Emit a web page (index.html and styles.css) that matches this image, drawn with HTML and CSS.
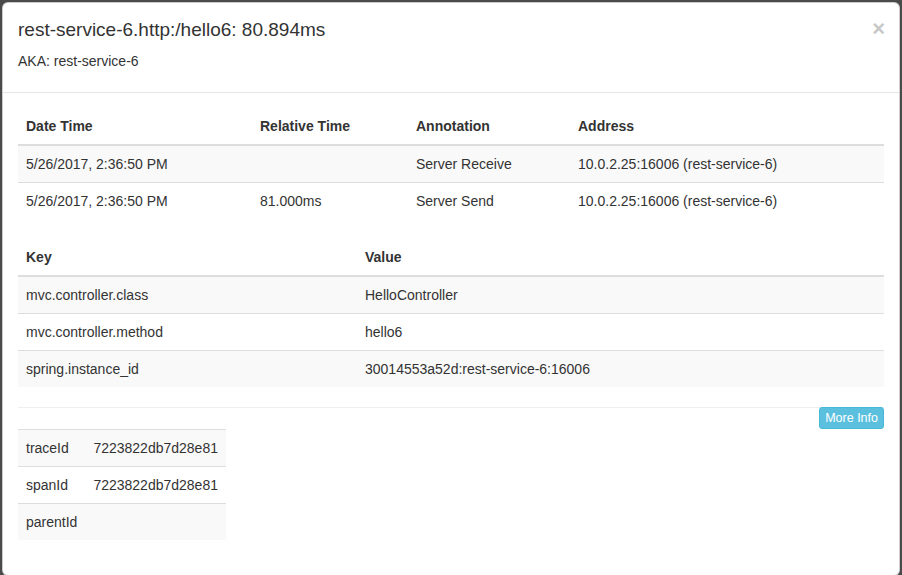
FILE: index.html
```html
<!DOCTYPE html>
<html>
<head>
<meta charset="utf-8">
<link rel="stylesheet" href="styles.css">
</head>
<body>
<div class="modal">
  <div class="modal-header">
    <div class="titles">
      <h4 class="title">rest-service-6.http:/hello6: 80.894ms</h4>
      <h5 class="aka">AKA: rest-service-6</h5>
    </div>
    <span class="close">&times;</span>
  </div>
  <div class="modal-body">
    <table class="table striped annotations">
      <colgroup><col class="c1"><col class="c2"><col class="c3"><col></colgroup>
      <thead>
        <tr><th>Date Time</th><th>Relative Time</th><th>Annotation</th><th>Address</th></tr>
      </thead>
      <tbody>
        <tr><td>5/26/2017, 2:36:50 PM</td><td></td><td>Server Receive</td><td>10.0.2.25:16006 (rest-service-6)</td></tr>
        <tr><td>5/26/2017, 2:36:50 PM</td><td>81.000ms</td><td>Server Send</td><td>10.0.2.25:16006 (rest-service-6)</td></tr>
      </tbody>
    </table>
    <table class="table striped tags">
      <colgroup><col class="k1"><col></colgroup>
      <thead>
        <tr><th>Key</th><th>Value</th></tr>
      </thead>
      <tbody>
        <tr><td>mvc.controller.class</td><td>HelloController</td></tr>
        <tr><td>mvc.controller.method</td><td>hello6</td></tr>
        <tr><td>spring.instance_id</td><td>30014553a52d:rest-service-6:16006</td></tr>
      </tbody>
    </table>
    <hr class="divider">
    <div class="actions">
      <button class="btn-info">More Info</button>
    </div>
    <table class="table striped ids">
      <tbody>
        <tr><td>traceId</td><td>7223822db7d28e81</td></tr>
        <tr><td>spanId</td><td>7223822db7d28e81</td></tr>
        <tr><td>parentId</td><td></td></tr>
      </tbody>
    </table>
  </div>
</div>
</body>
</html>
```
FILE: styles.css
```css
html, body {
  margin: 0;
  padding: 0;
}
body {
  background: #4a4a4a;
  font-family: "Liberation Sans", Arial, Helvetica, sans-serif;
  font-size: 14px;
  line-height: 20px;
  color: #333;
  padding: 2px 0 0 2px;
  height: 575px;
  box-sizing: border-box;
  overflow: hidden;
}
.modal {
  width: 898px;
  background: #fff;
  border: 1px solid rgba(0,0,0,.2);
  border-radius: 6px;
  box-sizing: border-box;
}
.modal-header {
  display: flex;
  justify-content: space-between;
  align-items: flex-start;
  padding: 17px 15px 15px;
  border-bottom: 1px solid #e5e5e5;
}
.title {
  margin: 0;
  font-size: 19px;
  line-height: 20px;
  font-weight: 500;
  color: #333;
}
.aka {
  margin: 11px 0 6px;
  font-size: 14px;
  line-height: 20px;
  font-weight: 500;
}
.close {
  font-size: 22px;
  font-weight: bold;
  line-height: 21px;
  color: #c8c8c8;
  margin-top: -2px;
  margin-right: -1px;
}
.modal-body {
  padding: 15px;
}
.table {
  border-collapse: collapse;
  border-spacing: 0;
  margin-bottom: 20px;
}
.annotations, .tags {
  width: 100%;
  table-layout: fixed;
}
.table th, .table td {
  padding: 8px;
  text-align: left;
  vertical-align: top;
  line-height: 20px;
  height: 20px;
}
.table th {
  font-weight: bold;
  border-bottom: 2px solid #ddd;
}
.table td {
  border-top: 1px solid #ddd;
}
.table thead + tbody tr:first-child td {
  border-top: 0;
}
.striped tbody tr:nth-child(odd) {
  background: #f9f9f9;
}
.c1 { width: 234px; }
.c2 { width: 156px; }
.c3 { width: 162px; }
.k1 { width: 339px; }
.divider {
  margin: 0;
  border: 0;
  border-top: 1px solid #eee;
}
.actions {
  display: flex;
  justify-content: flex-end;
  margin-top: -1px;
}
.btn-info {
  font-family: "Liberation Sans", Arial, Helvetica, sans-serif;
  font-size: 12.5px;
  line-height: 18px;
  padding: 1px 5px;
  color: #fff;
  background: #5bc0de;
  border: 1px solid #46b8da;
  border-radius: 3px;
}
.ids {
  margin-bottom: 20px;
}
```
